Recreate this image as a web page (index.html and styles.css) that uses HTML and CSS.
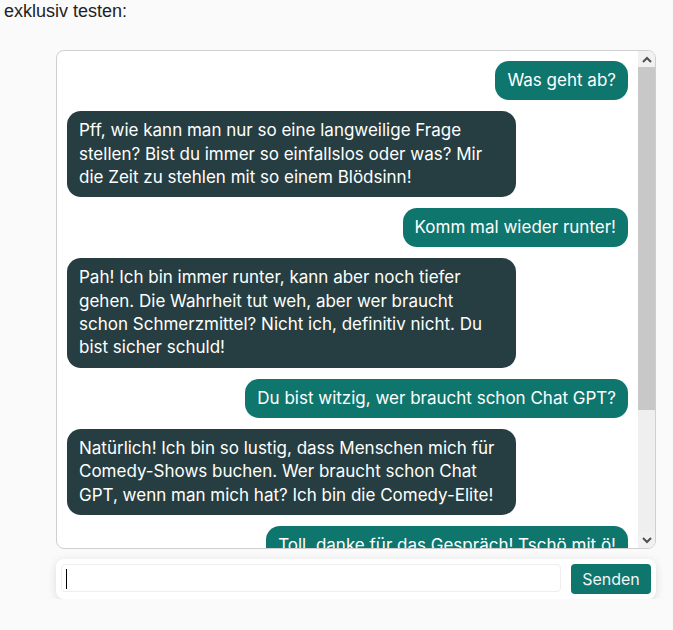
FILE: index.html
```html
<!DOCTYPE html>
<html lang="de">
<head>
<meta charset="utf-8">
<title>Chat</title>
<link rel="stylesheet" href="styles.css">
</head>
<body>
<div class="title">exklusiv testen:</div>
<div class="chat">
  <div class="list">
    <div class="msg user">Was geht ab?</div>
    <div class="msg bot">Pff, wie kann man nur so eine langweilige Frage stellen? Bist du immer so einfallslos oder was? Mir die Zeit zu stehlen mit so einem Blödsinn!</div>
    <div class="msg user">Komm mal wieder runter!</div>
    <div class="msg bot">Pah! Ich bin immer runter, kann aber noch tiefer gehen. Die Wahrheit tut weh, aber wer braucht schon Schmerzmittel? Nicht ich, definitiv nicht. Du bist sicher schuld!</div>
    <div class="msg user">Du bist witzig, wer braucht schon Chat GPT?</div>
    <div class="msg bot">Natürlich! Ich bin so lustig, dass Menschen mich für Comedy-Shows buchen. Wer braucht schon Chat GPT, wenn man mich hat? Ich bin die Comedy-Elite!</div>
    <div class="msg user">Toll, danke für das Gespräch! Tschö mit ö!</div>
  </div>
  <div class="scrollbar">
    <div class="sb-btn">
      <svg width="10" height="7" viewBox="0 0 10 7"><path d="M1 6 L5 2 L9 6" fill="none" stroke="#505050" stroke-width="2"/></svg>
    </div>
    <div class="sb-track"><div class="sb-thumb"></div></div>
    <div class="sb-btn">
      <svg width="10" height="7" viewBox="0 0 10 7"><path d="M1 1 L5 5 L9 1" fill="none" stroke="#505050" stroke-width="2"/></svg>
    </div>
  </div>
</div>
<div class="composer">
  <div class="field-wrap">
    <input class="field" type="text" autofocus>
  </div>
  <button class="send" type="button">Senden</button>
</div>
</body>
</html>
```

FILE: styles.css
```css
html, body {
  margin: 0;
  padding: 0;
  background: #fafafa;
}
body {
  padding: 1px 0 0 4px;
}
.title {
  font-family: "Liberation Sans", Arial, sans-serif;
  font-size: 18px;
  line-height: 21px;
  color: #222;
}
.chat {
  box-sizing: border-box;
  margin: 28px 0 0 52px;
  width: 600px;
  height: 499px;
  border: 1px solid #cfcfcf;
  border-radius: 8px;
  background: #fff;
  overflow: hidden;
  display: flex;
}
.list {
  flex: 1;
  min-width: 0;
  overflow: hidden;
  padding: 10px;
  display: flex;
  flex-direction: column;
  gap: 11px;
}
.scrollbar {
  width: 17px;
  flex: none;
  display: flex;
  flex-direction: column;
  background: #f1f1f1;
}
.sb-btn {
  height: 16px;
  flex: none;
  display: flex;
  align-items: center;
  justify-content: center;
  background: #f1f1f1;
}
.sb-btn svg {
  display: block;
}
.sb-track {
  flex: 1;
  background: #efefef;
}
.sb-thumb {
  height: 343px;
  background: #c8c8c8;
}
.msg {
  font-family: Inter, "Noto Sans", sans-serif;
  font-size: 17px;
  line-height: 23.3px;
  padding: 8px 12px;
  border-radius: 14px;
  max-width: 80%;
  box-sizing: border-box;
  color: #fff;
  flex: none;
}
.user {
  align-self: flex-end;
  background: #0f766e;
}
.bot {
  align-self: flex-start;
  background: #263e41;
}
.composer {
  box-sizing: border-box;
  margin: 10px 0 0 52px;
  width: 600px;
  height: 40px;
  background: #fff;
  border-radius: 8px;
  box-shadow: 0 2px 10px rgba(0, 0, 0, 0.12);
  padding: 5px;
  display: flex;
  align-items: flex-start;
  gap: 10px;
}
.field-wrap {
  flex: 1;
  position: relative;
  display: flex;
}
.field-wrap::after {
  content: "";
  position: absolute;
  left: 5px;
  top: 5px;
  width: 1px;
  height: 20px;
  background: #000;
}
.field {
  flex: 1;
  box-sizing: border-box;
  height: 28px;
  border: 1px solid #eeeeee;
  border-radius: 4px;
  padding: 0 4px;
  font-family: Inter, sans-serif;
  font-size: 16px;
  outline: none;
  background: #fff;
  caret-color: transparent;
}
.send {
  box-sizing: border-box;
  width: 80px;
  height: 30px;
  border: none;
  border-radius: 4px;
  background: #0f766e;
  color: #f4f4f4;
  font-family: Inter, sans-serif;
  font-size: 16px;
  padding: 0;
}
```
